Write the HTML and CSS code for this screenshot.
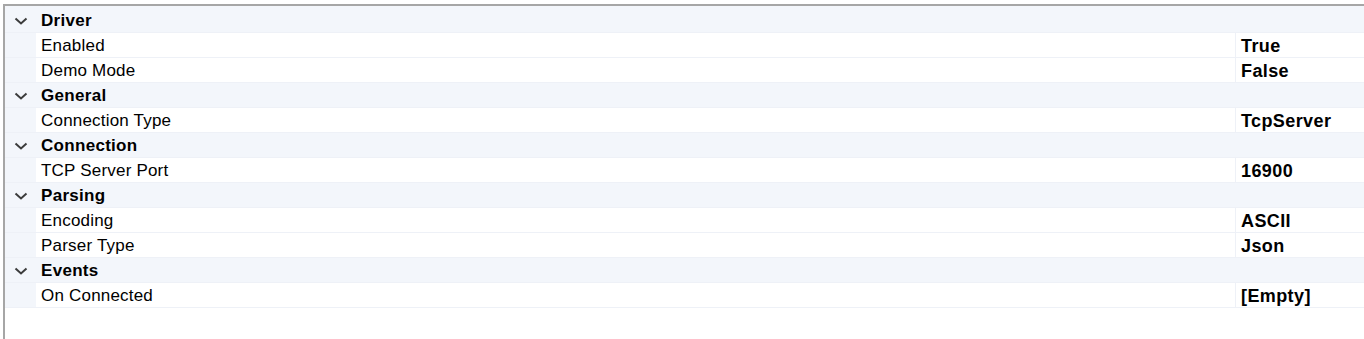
FILE: index.html
```html
<!DOCTYPE html>
<html lang="en">
<head>
    <meta charset="UTF-8">
    <title>Driver Properties</title>
    <link rel="stylesheet" href="styles.css">
</head>
<body>
    <div class="grid">
        <div class="rows">
            <div class="category"><span class="toggle"><svg width="14" height="8" viewBox="0 0 14 8"><path d="M1.5 1.5 L7 6.5 L12.5 1.5" fill="none" stroke="#3c3c3c" stroke-width="2"/></svg></span><span class="cat-name">Driver</span></div>
            <div class="prop"><span class="gutter"></span><span class="name">Enabled</span><span class="value">True</span></div>
            <div class="prop"><span class="gutter"></span><span class="name">Demo Mode</span><span class="value">False</span></div>

            <div class="category"><span class="toggle"><svg width="14" height="8" viewBox="0 0 14 8"><path d="M1.5 1.5 L7 6.5 L12.5 1.5" fill="none" stroke="#3c3c3c" stroke-width="2"/></svg></span><span class="cat-name">General</span></div>
            <div class="prop"><span class="gutter"></span><span class="name">Connection Type</span><span class="value">TcpServer</span></div>

            <div class="category"><span class="toggle"><svg width="14" height="8" viewBox="0 0 14 8"><path d="M1.5 1.5 L7 6.5 L12.5 1.5" fill="none" stroke="#3c3c3c" stroke-width="2"/></svg></span><span class="cat-name">Connection</span></div>
            <div class="prop"><span class="gutter"></span><span class="name">TCP Server Port</span><span class="value">16900</span></div>

            <div class="category"><span class="toggle"><svg width="14" height="8" viewBox="0 0 14 8"><path d="M1.5 1.5 L7 6.5 L12.5 1.5" fill="none" stroke="#3c3c3c" stroke-width="2"/></svg></span><span class="cat-name">Parsing</span></div>
            <div class="prop"><span class="gutter"></span><span class="name">Encoding</span><span class="value">ASCII</span></div>
            <div class="prop"><span class="gutter"></span><span class="name">Parser Type</span><span class="value">Json</span></div>

            <div class="category"><span class="toggle"><svg width="14" height="8" viewBox="0 0 14 8"><path d="M1.5 1.5 L7 6.5 L12.5 1.5" fill="none" stroke="#3c3c3c" stroke-width="2"/></svg></span><span class="cat-name">Events</span></div>
            <div class="prop"><span class="gutter"></span><span class="name">On Connected</span><span class="value">[Empty]</span></div>
        </div>
    </div>
</body>
</html>
```

FILE: styles.css
```css
body {
    margin: 0;
    background: #fff;
    font-family: "Liberation Sans", Arial, sans-serif;
    font-size: 17px;
    color: #000;
}
.grid {
    margin: 4px 0 0 3px;
    height: 335px;
    border-top: 2px solid #a6a6a6;
    border-left: 2px solid #a6a6a6;
    box-sizing: border-box;
}
.rows {
    padding-top: 2px;
    background: #f3f6fb;
    border-bottom: 1px solid #eef1f7;
}
.category,
.prop {
    display: flex;
    height: 24px;
    line-height: 26px;
    overflow: hidden;
    border-bottom: 1px solid #eef1f7;
}
.prop:last-child {
    border-bottom: none;
}
.category {
    background: #f3f6fb;
}
.toggle {
    width: 31px;
    display: flex;
    align-items: center;
    justify-content: center;
    padding-top: 1px;
}
.cat-name {
    font-weight: bold;
    padding-left: 5px;
    letter-spacing: 0.3px;
}
.gutter {
    width: 31px;
    flex: none;
}
.name {
    flex: 1;
    background: #fff;
    padding-left: 5px;
    letter-spacing: 0.2px;
    border-right: 1px solid #eef1f7;
}
.value {
    width: 123px;
    flex: none;
    background: #fff;
    padding-left: 5px;
    font-size: 18px;
    font-weight: bold;
    letter-spacing: 0.4px;
}
```
